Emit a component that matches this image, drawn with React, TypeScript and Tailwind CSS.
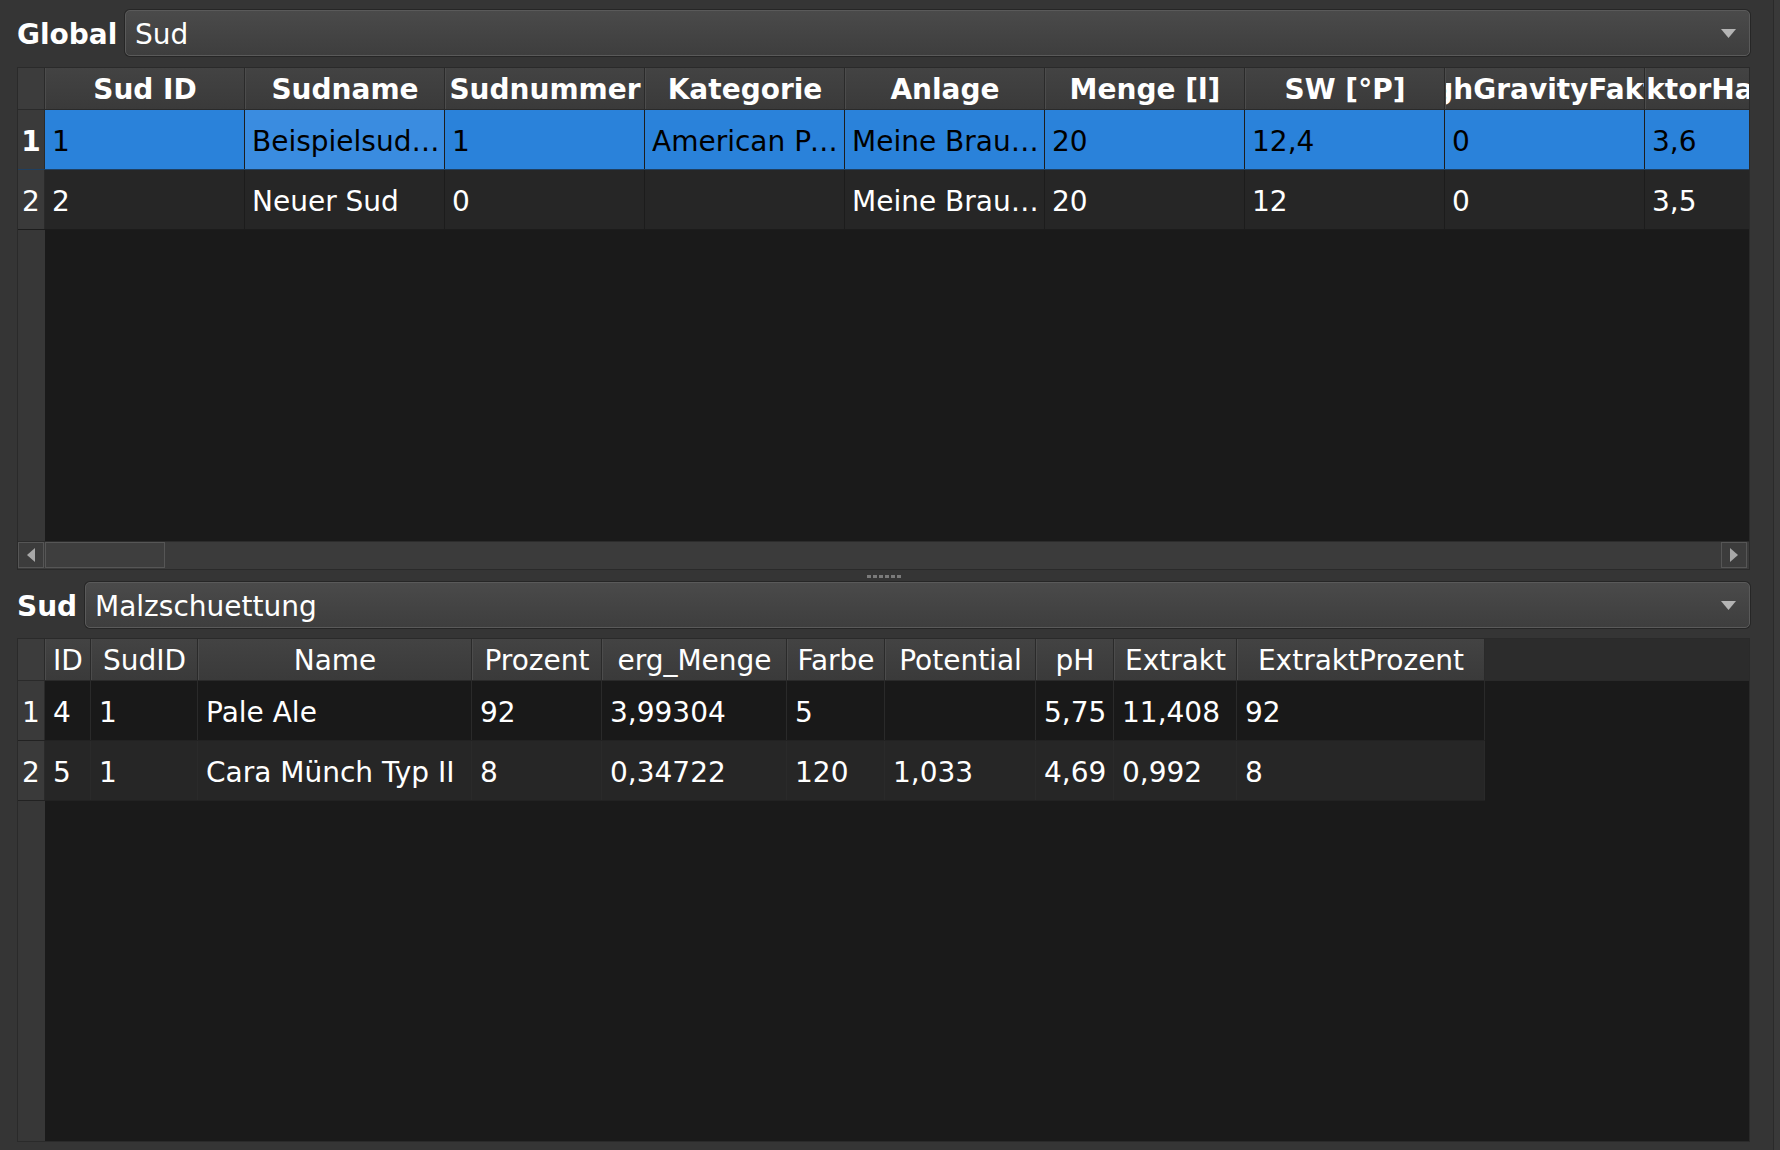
import React from "react";

const topCols = [
  "Sud ID",
  "Sudname",
  "Sudnummer",
  "Kategorie",
  "Anlage",
  "Menge [l]",
  "SW [°P]",
  "HighGravityFaktor",
  "FaktorHauptguss",
];

const topRows = [
  ["1", "Beispielsud Pale Ale", "1", "American Pale Ale", "Meine Brauanlage", "20", "12,4", "0", "3,6"],
  ["2", "Neuer Sud", "0", "", "Meine Brauanlage", "20", "12", "0", "3,5"],
];

const malzCols = [
  { name: "ID", w: "w-[46px]" },
  { name: "SudID", w: "w-[107px]" },
  { name: "Name", w: "w-[274px]" },
  { name: "Prozent", w: "w-[130px]" },
  { name: "erg_Menge", w: "w-[185px]" },
  { name: "Farbe", w: "w-[98px]" },
  { name: "Potential", w: "w-[151px]" },
  { name: "pH", w: "w-[78px]" },
  { name: "Extrakt", w: "w-[123px]" },
  { name: "ExtraktProzent", w: "w-[248px]" },
];

const malzRows = [
  ["4", "1", "Pale Ale", "92", "3,99304", "5", "", "5,75", "11,408", "92"],
  ["5", "1", "Cara Münch Typ II", "8", "0,34722", "120", "1,033", "4,69", "0,992", "8"],
];

const Combo = ({ value }: { value: string }) => (
  <div className="flex h-[46px] flex-1 items-center justify-between rounded-[5px] border border-[#5a5a5a] bg-gradient-to-b from-[#4a4a4a] to-[#3e3e3e] pl-[9px] pr-[13px] shadow-[0_0_0_1px_#262626]">
    <span className="pt-[3px]">{value}</span>
    <svg width="15" height="9" viewBox="0 0 15 9">
      <path d="M0 0 L15 0 L7.5 9 Z" fill="#b4b4b4" />
    </svg>
  </div>
);

const RowHead = ({ n, bold }: { n: string; bold?: boolean }) => (
  <div
    className={`flex w-[27px] shrink-0 items-center justify-center border-r border-[#2a2a2a] bg-[#3a3a3a] pt-[4px] text-white ${
      bold ? "font-bold" : ""
    }`}
  >
    {n}
  </div>
);

const Splitter = () => (
  <div className="flex h-[12px] items-center justify-center gap-[2px]">
    {[0, 1, 2, 3, 4, 5].map((i) => (
      <span key={i} className="h-[3px] w-[4px] bg-[#7a7a7a]" />
    ))}
  </div>
);

const ScrollArrow = ({ dir }: { dir: "left" | "right" }) => (
  <div className="flex h-[26px] w-[26px] shrink-0 items-center justify-center border border-[#565656] bg-[#3c3c3c]">
    <svg width="8" height="14" viewBox="0 0 8 14">
      <path d={dir === "left" ? "M8 0 L8 14 L0 7 Z" : "M0 0 L0 14 L8 7 Z"} fill="#a8a8a8" />
    </svg>
  </div>
);

const TopTable = () => (
  <div className="mt-[11px] flex h-[503px] flex-col overflow-hidden border border-[#2a2a2a] bg-[#1a1a1a]">
    <div className="flex h-[42px] shrink-0 border-b border-[#2a2a2a] font-bold">
      <div className="w-[27px] shrink-0 border-r border-[#2a2a2a] bg-[#3c3c3c]" />
      {topCols.map((c) => (
        <div
          key={c}
          className="flex w-[200px] shrink-0 items-center justify-center overflow-hidden whitespace-nowrap border-r border-l border-r-[#2a2a2a] border-l-[#4c4c4c] bg-gradient-to-b from-[#434343] to-[#3a3a3a] pt-[3px]"
        >
          {c}
        </div>
      ))}
    </div>
    {topRows.map((r, ri) => {
      const sel = ri === 0;
      return (
        <div
          key={ri}
          className={`flex h-[60px] shrink-0 border-b ${
            sel ? "border-[#1f3f60] bg-[#2a82da] text-black" : "border-[#1c1c1c] bg-[#262626]"
          }`}
        >
          <RowHead n={r[0]} bold={sel} />
          {r.map((v, ci) => (
            <div
              key={ci}
              className={`flex w-[200px] shrink-0 items-center border-r pl-[7px] pr-[3px] pt-[4px] ${
                sel ? "border-[#1d1d1d]" : "border-[#1c1c1c]"
              } ${sel && ci === 1 ? "bg-[#3a8ce0]" : ""}`}
            >
              <span className="truncate">{v}</span>
            </div>
          ))}
        </div>
      );
    })}
    <div className="flex flex-1">
      <div className="w-[27px] shrink-0 bg-[#373737]" />
      <div className="flex-1 bg-[#1a1a1a]" />
    </div>
    <div className="flex h-[28px] shrink-0 items-start gap-[1px] border-t border-[#2c2c2c] bg-[#3b3b3b]">
      <ScrollArrow dir="left" />
      <div className="h-[26px] w-[120px] border border-[#565656] bg-[#3e3e3e]" />
      <div className="flex-1" />
      <ScrollArrow dir="right" />
      <div className="w-[1px]" />
    </div>
  </div>
);

const MalzTable = () => (
  <div className="mt-[10px] flex h-[504px] flex-col overflow-hidden border border-[#2a2a2a] bg-[#1a1a1a]">
    <div className="flex h-[42px] shrink-0 border-b border-[#2a2a2a] bg-[#2c2c2c]">
      <div className="w-[27px] shrink-0 border-r border-[#2a2a2a] bg-[#3c3c3c]" />
      {malzCols.map((c) => (
        <div
          key={c.name}
          className={`${c.w} flex shrink-0 items-center justify-center overflow-hidden whitespace-nowrap border-r border-l border-r-[#2a2a2a] border-l-[#4c4c4c] bg-gradient-to-b from-[#434343] to-[#3a3a3a] pt-[3px]`}
        >
          {c.name}
        </div>
      ))}
    </div>
    {malzRows.map((r, ri) => (
      <div key={ri} className="flex h-[60px] shrink-0">
        <div className="flex border-b border-[#222222]">
          <RowHead n={String(ri + 1)} />
          {r.map((v, ci) => (
            <div
              key={ci}
              className={`${malzCols[ci].w} flex shrink-0 items-center border-r border-[#2a2a2a] pl-[8px] pr-[2px] pt-[4px] ${
                ri === 1 ? "bg-[#262626]" : "bg-[#191919]"
              }`}
            >
              <span className="truncate">{v}</span>
            </div>
          ))}
        </div>
        <div className="flex-1 bg-[#1a1a1a]" />
      </div>
    ))}
    <div className="flex flex-1">
      <div className="w-[27px] shrink-0 bg-[#373737]" />
      <div className="flex-1 bg-[#1a1a1a]" />
    </div>
  </div>
);

export default function App() {
  return (
    <div className="flex h-[1150px] w-[1780px] overflow-hidden bg-[#353535] font-['DejaVu_Sans',sans-serif] text-[28px] text-white">
      <div className="flex w-[1773px] flex-col pb-[8px] pl-[17px] pr-[23px] pt-[10px]">
        <div className="flex h-[46px] shrink-0 items-center">
          <span className="w-[108px] pt-[3px] font-bold">Global</span>
          <Combo value="Sud" />
        </div>
        <TopTable />
        <Splitter />
        <div className="flex h-[46px] shrink-0 items-center">
          <span className="w-[68px] pt-[3px] font-bold">Sud</span>
          <Combo value="Malzschuettung" />
        </div>
        <MalzTable />
      </div>
      <div className="w-[7px] border-l border-[#2a2a2a] bg-[#393939]" />
    </div>
  );
}
